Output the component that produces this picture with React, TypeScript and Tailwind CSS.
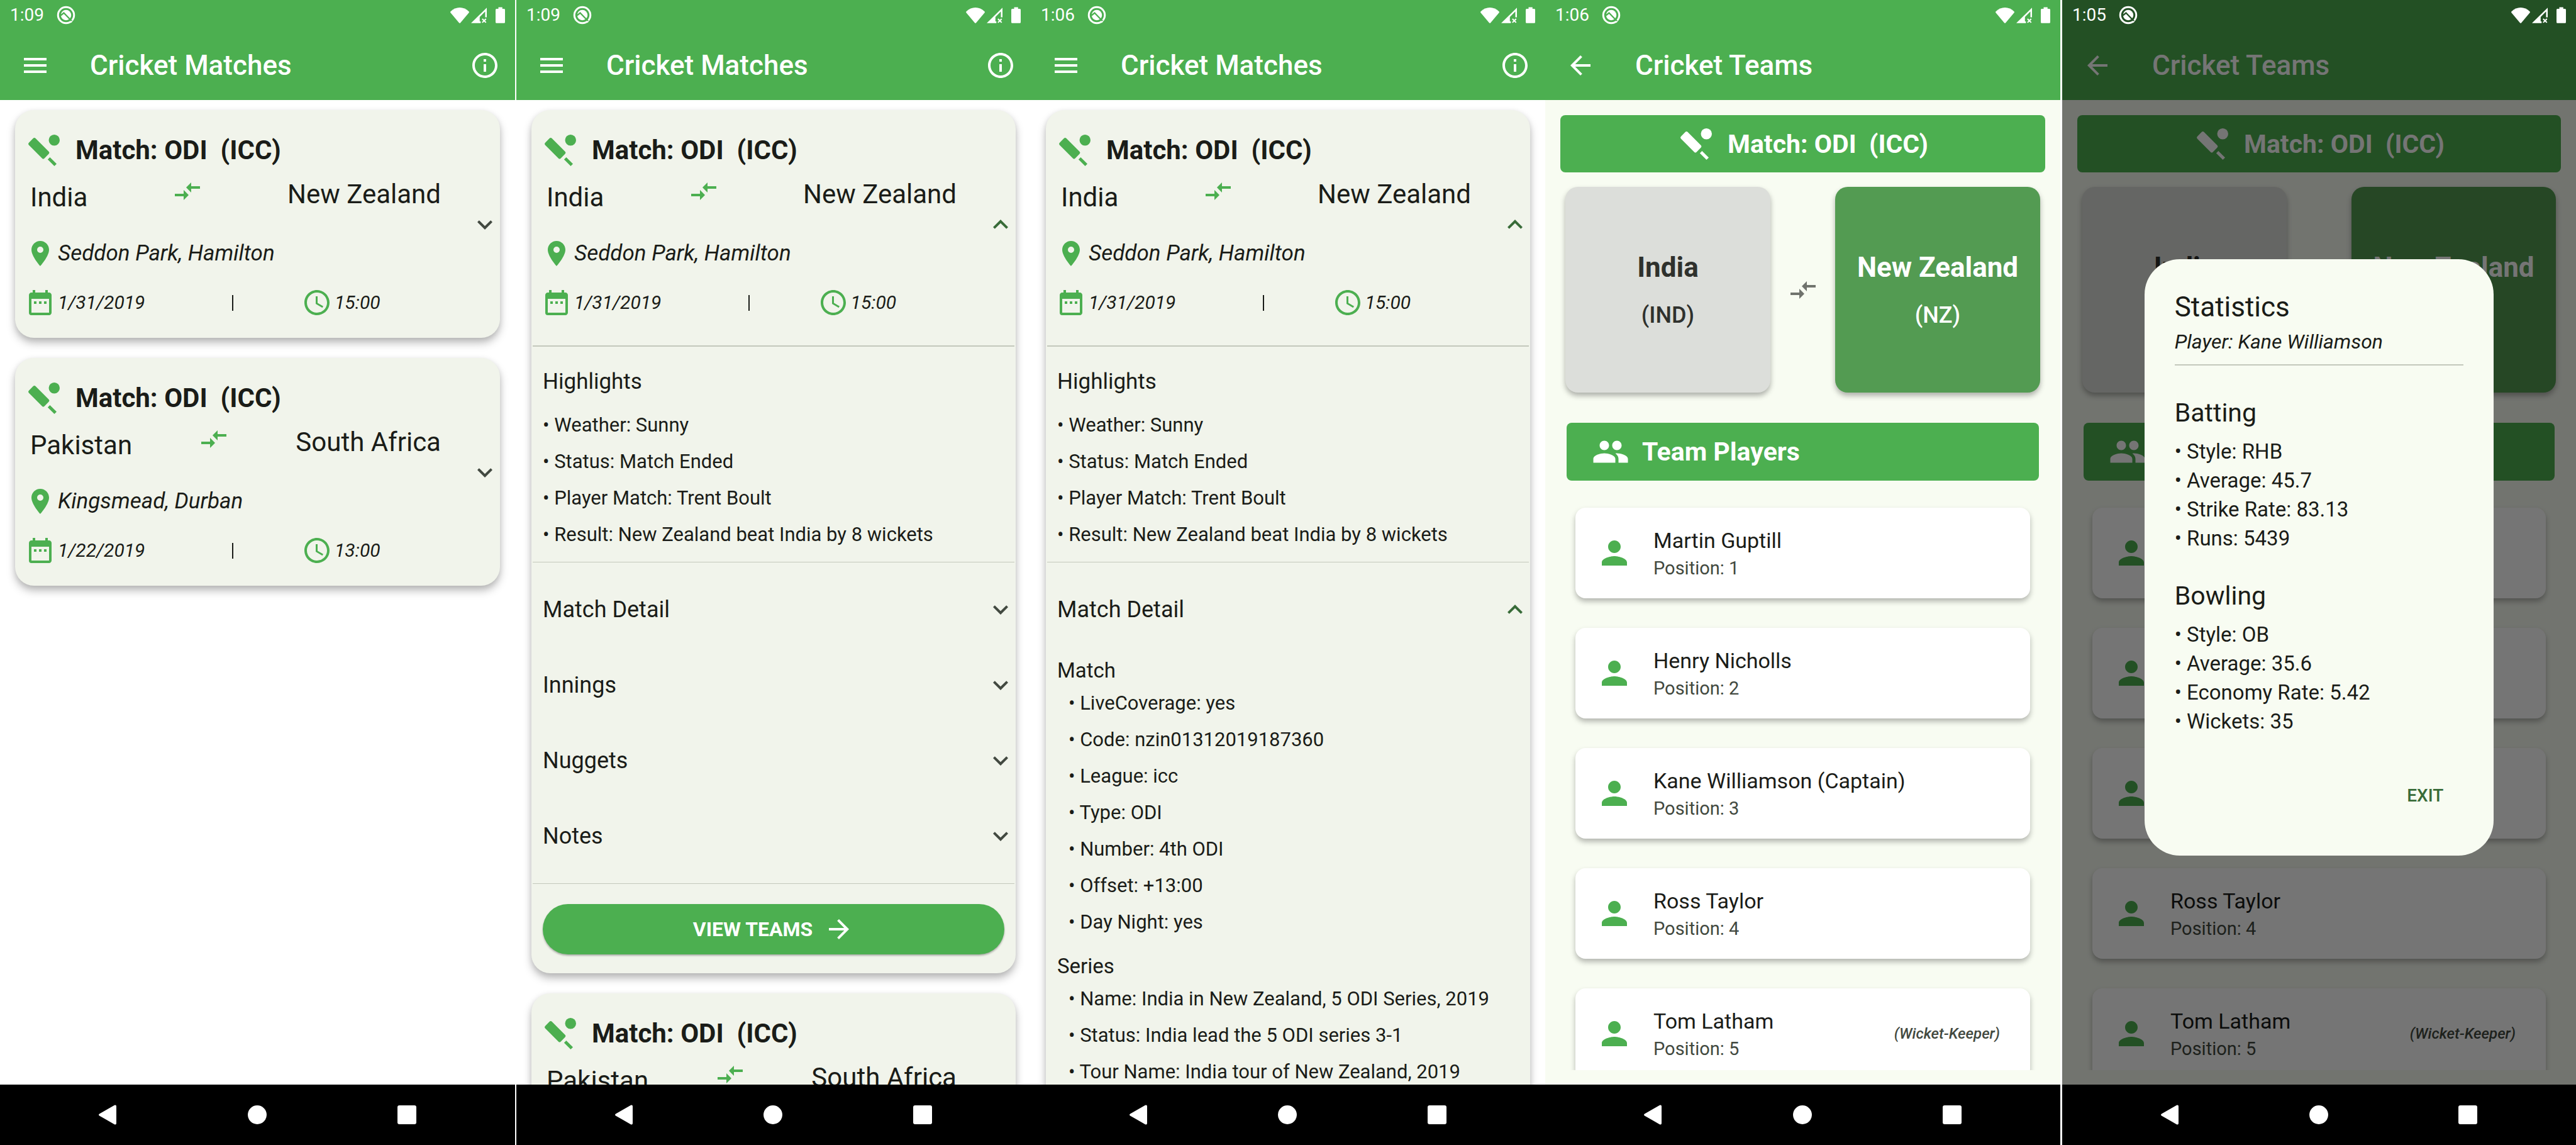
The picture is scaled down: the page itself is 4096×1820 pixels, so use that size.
import type { ReactNode } from "react";
import {
  MdArrowBack,
  MdArrowForward,
  MdCompareArrows,
  MdDateRange,
  MdExpandLess,
  MdExpandMore,
  MdGroup,
  MdInfoOutline,
  MdLocationOn,
  MdMenu,
  MdPerson,
} from "react-icons/md";

type Match = { home: string; away: string; venue: string; date: string; time: string };

const matches: Match[] = [
  { home: "India", away: "New Zealand", venue: "Seddon Park, Hamilton", date: "1/31/2019", time: "15:00" },
  { home: "Pakistan", away: "South Africa", venue: "Kingsmead, Durban", date: "1/22/2019", time: "13:00" },
];

const highlights = [
  "Weather: Sunny",
  "Status: Match Ended",
  "Player Match: Trent Boult",
  "Result: New Zealand beat India by 8 wickets",
];

const sections = ["Match Detail", "Innings", "Nuggets", "Notes"];

const details = [
  {
    title: "Match",
    items: [
      "LiveCoverage: yes",
      "Code: nzin01312019187360",
      "League: icc",
      "Type: ODI",
      "Number: 4th ODI",
      "Offset: +13:00",
      "Day Night: yes",
    ],
  },
  {
    title: "Series",
    items: [
      "Name: India in New Zealand, 5 ODI Series, 2019",
      "Status: India lead the 5 ODI series 3-1",
      "Tour Name: India tour of New Zealand, 2019",
    ],
  },
];

const players = [
  { name: "Martin Guptill", role: "" },
  { name: "Henry Nicholls", role: "" },
  { name: "Kane Williamson (Captain)", role: "" },
  { name: "Ross Taylor", role: "" },
  { name: "Tom Latham", role: "(Wicket-Keeper)" },
];

const statistics = [
  { title: "Batting", items: ["Style: RHB", "Average: 45.7", "Strike Rate: 83.13", "Runs: 5439"] },
  { title: "Bowling", items: ["Style: OB", "Average: 35.6", "Economy Rate: 5.42", "Wickets: 35"] },
];

function CricketIcon({ className }: { className: string }) {
  return (
    <svg viewBox="0 0 24 24" fill="currentColor" aria-hidden="true" className={className}>
      <path d="M15.05 12.81 6.56 4.32a1 1 0 0 0-1.41 0L2.32 7.15a1 1 0 0 0 0 1.41l8.49 8.49a1 1 0 0 0 1.41 0l2.83-2.83a1 1 0 0 0 0-1.41z" />
      <path d="m14.34 17.76 1.41-1.41L20 20.6 18.58 22z" />
      <circle cx="18.5" cy="5.5" r="3.5" />
    </svg>
  );
}

function ClockIcon({ className }: { className: string }) {
  return (
    <svg viewBox="0 0 24 24" fill="currentColor" aria-hidden="true" className={className}>
      <path d="M11.99 2C6.47 2 2 6.48 2 12s4.47 10 9.99 10C17.52 22 22 17.52 22 12S17.52 2 11.99 2zM12 20c-4.42 0-8-3.58-8-8s3.58-8 8-8 8 3.58 8 8-3.58 8-8 8z" />
      <path d="M12.5 7H11v6l5.25 3.15.75-1.23-4.5-2.67z" />
    </svg>
  );
}

function StatusBar({ time, cutout }: { time: string; cutout: string }) {
  return (
    <div className="flex h-12 shrink-0 items-center px-4 text-white">
      <span className="text-[28px] leading-8">{time}</span>
      <svg viewBox="0 0 120 120" aria-hidden="true" className="ml-5 size-[30px]">
        <circle cx="60" cy="60" r="51" fill="none" stroke="currentColor" strokeWidth="12" />
        <circle cx="60" cy="60" r="33" fill="currentColor" />
        <path d="M26 62 46 46 97 99" fill="none" strokeWidth="9" className={cutout} />
        <path d="m88 107 10-8" fill="none" stroke="currentColor" strokeWidth="8" />
      </svg>
      <svg viewBox="0 0 117 97" fill="currentColor" aria-hidden="true" className="ml-auto h-[25px] w-[30px]">
        <path d="M2 24C34-8 83-8 115 24q3 3 1 7L62 95q-3 3-7 0L1 31q-2-4 1-7z" />
      </svg>
      <svg viewBox="0 0 98 97" fill="currentColor" aria-hidden="true" className="ml-[3px] size-[25px]">
        <path d="M98 0v60H88V24L54 58v28h6v11H0z" />
        <path d="m70 70 23 23m0-23L70 93" stroke="currentColor" strokeWidth="8" />
      </svg>
      <svg viewBox="0 0 60 101" fill="currentColor" aria-hidden="true" className="ml-[14px] h-[26px] w-[15px]">
        <path d="M18 0h25v10h11q6 0 6 6v79q0 6-6 6H6q-6 0-6-6V16q0-6 6-6h12z" />
      </svg>
    </div>
  );
}

function AppBar({ title, leading, trailing }: { title: string; leading: ReactNode; trailing?: ReactNode }) {
  return (
    <div className="flex h-[111px] shrink-0 items-center px-6">
      <button className="ml-2" aria-label="Navigate">
        {leading}
      </button>
      <h1 className="ml-[63px] flex-1 text-[44px] leading-[56px] font-medium">{title}</h1>
      {trailing}
    </div>
  );
}

function NavBar() {
  return (
    <nav aria-label="System" className="flex h-24 shrink-0 items-center justify-between bg-black px-[157px] text-white">
      <button aria-label="Back">
        <svg viewBox="0 0 28 32" fill="currentColor" className="h-8 w-7">
          <path d="M1 14.6 25 .8Q28-.4 28 2.8v26.4q0 3.200-3 2L1 17.400q-2-1.400 0-2.800z" />
        </svg>
      </button>
      <button aria-label="Home" className="size-[30px] rounded-full bg-white" />
      <button aria-label="Recent apps" className="size-[30px] rounded-[3px] bg-white" />
    </nav>
  );
}

function MatchesHeader({ time }: { time: string }) {
  return (
    <header className="shrink-0 bg-[#4caf50] text-white">
      <StatusBar time={time} cutout="stroke-[#4caf50]" />
      <AppBar
        title="Cricket Matches"
        leading={<MdMenu className="size-12" />}
        trailing={
          <button aria-label="About">
            <MdInfoOutline className="size-12" />
          </button>
        }
      />
    </header>
  );
}

function MatchSummary({ match, open = false }: { match: Match; open?: boolean }) {
  return (
    <button aria-expanded={open} className="flex w-full items-center pt-[34px] pb-8 pl-4 text-left">
      <div className="min-w-0 flex-1">
        <div className="flex items-center gap-5">
          <CricketIcon className="size-[60px] text-[#4caf50]" />
          <h2 className="text-[42px] leading-[60px] font-bold whitespace-pre">Match: ODI  (ICC)</h2>
        </div>
        <div className="mt-[11px] mr-[46px] ml-2 flex h-[58px] justify-between text-[42px] leading-[48px]">
          <span className="self-end">{match.home}</span>
          <MdCompareArrows className="size-12 self-start text-[#4caf50]" />
          <span className="self-center">{match.away}</span>
        </div>
        <div className="mt-[41px] flex items-center gap-1">
          <MdLocationOn className="size-12 text-[#4caf50]" />
          <span className="text-[35px] leading-[48px] italic">{match.venue}</span>
        </div>
        <div className="mt-[30px] grid grid-cols-[329fr_2px_376fr] items-center text-[30px] leading-[48px]">
          <div className="flex items-center gap-1">
            <MdDateRange className="size-12 text-[#4caf50]" />
            <span className="italic">{match.date}</span>
          </div>
          <div className="h-[25px] bg-[#1a1c18]" />
          <div className="flex items-center gap-1 pl-[109px]">
            <ClockIcon className="size-12 text-[#4caf50]" />
            <span className="italic">{match.time}</span>
          </div>
        </div>
      </div>
      {open ? (
        <MdExpandLess className="size-12 text-[#386b38]" />
      ) : (
        <MdExpandMore className="size-12 text-[#424940]" />
      )}
    </button>
  );
}

function Card({ children }: { children: ReactNode }) {
  return (
    <article className="shrink-0 rounded-[30px] bg-[#f1f4eb] text-[#1a1c18] shadow-[0_8px_14px_rgba(0,0,0,0.26),0_2px_8px_rgba(0,0,0,0.08)]">
      {children}
    </article>
  );
}

function CardList({ children }: { children: ReactNode }) {
  return <main className="flex min-h-0 flex-1 flex-col gap-8 overflow-hidden px-6 py-4">{children}</main>;
}

function Highlights() {
  return (
    <section className="mx-[2px] mt-3 border-y border-t-2 border-[#c3c8bc] px-4 pt-9 pb-[14px]">
      <h3 className="text-[35px] leading-10">Highlights</h3>
      <ul className="mt-5 text-[31px] leading-[58px]">
        {highlights.map((item) => (
          <li key={item}>• {item}</li>
        ))}
      </ul>
    </section>
  );
}

function SectionTile({ title, open = false }: { title: string; open?: boolean }) {
  return (
    <button
      aria-expanded={open}
      className="flex h-[120px] w-full items-center justify-between pl-[18px] text-left text-[36px]"
    >
      <span>{title}</span>
      {open ? (
        <MdExpandLess className="size-12 text-[#386b38]" />
      ) : (
        <MdExpandMore className="size-12 text-[#424940]" />
      )}
    </button>
  );
}

function MatchBanner() {
  return (
    <div className="flex h-[91px] shrink-0 items-center justify-center gap-5 rounded-lg bg-[#4caf50] text-white">
      <CricketIcon className="size-[60px]" />
      <h2 className="text-[41px] leading-[60px] font-bold whitespace-pre">Match: ODI  (ICC)</h2>
    </div>
  );
}

function TeamCard({ name, code, selected = false }: { name: string; code: string; selected?: boolean }) {
  return (
    <button
      aria-pressed={selected}
      className={
        selected
          ? "flex h-[327px] flex-col items-center justify-center gap-5 rounded-[20px] bg-[#539b52] pt-1 text-white shadow-[0_5px_9px_rgba(0,0,0,0.3)]"
          : "flex h-[327px] flex-col items-center justify-center gap-5 rounded-[20px] bg-[#dcdeda] pt-1 text-[#2f312d] shadow-[0_5px_9px_rgba(0,0,0,0.3)]"
      }
    >
      <span className="text-[44px] leading-[56px] font-bold">{name}</span>
      <span className="text-[36px] leading-[56px] font-medium">({code})</span>
    </button>
  );
}

function TeamsScreen({ time, dialog }: { time: string; dialog?: ReactNode }) {
  return (
    <>
      <div className="relative flex min-h-0 flex-1 flex-col bg-[#f8fcf2]">
        <header className="shrink-0 bg-[#4caf50] text-white">
          {dialog ? <div className="h-12" /> : <StatusBar time={time} cutout="stroke-[#4caf50]" />}
          <AppBar title="Cricket Teams" leading={<MdArrowBack className="size-12" />} />
        </header>
        <main className="flex min-h-0 flex-1 flex-col px-6 pt-6 pb-[23px] text-[#1a1c18]">
          <MatchBanner />
          <div className="mx-2 mt-[23px] grid grid-cols-[1fr_103px_1fr] items-center">
            <TeamCard name="India" code="IND" />
            <MdCompareArrows className="size-12 justify-self-center text-[#70736d]" />
            <TeamCard name="New Zealand" code="NZ" selected />
          </div>
          <div className="mx-[10px] mt-12 flex h-[92px] shrink-0 items-center gap-5 rounded-lg bg-[#4caf50] px-10 text-white">
            <MdGroup className="size-[60px]" />
            <h2 className="text-[41px] leading-[60px] font-bold">Team Players</h2>
          </div>
          <ul className="flex min-h-0 flex-1 flex-col gap-[47px] overflow-hidden px-6 pt-[43px]">
            {players.map((player, index) => (
              <li key={player.name} className="shrink-0">
                <button className="flex h-36 w-full items-center rounded-2xl bg-white pr-12 pl-8 text-left shadow-[0_5px_9px_rgba(0,0,0,0.28)]">
                  <MdPerson className="size-[60px] text-[#4caf50]" />
                  <span className="ml-8 flex flex-1 flex-col">
                    <span className="text-[34px] leading-[48px]">{player.name}</span>
                    <span className="text-[29px] leading-10 text-[#424940]">Position: {index + 1}</span>
                  </span>
                  <span className="text-[24px] font-medium text-[#424940] italic">{player.role}</span>
                </button>
              </li>
            ))}
          </ul>
        </main>
        {dialog}
      </div>
      <NavBar />
    </>
  );
}

function StatisticsDialog({ time }: { time: string }) {
  return (
    <div className="absolute inset-0 flex flex-col bg-black/54">
      <StatusBar time={time} cutout="stroke-[#235025]" />
      <div className="grid flex-1 place-items-center">
        <section
          role="dialog"
          aria-labelledby="statistics-title"
          className="w-[68%] rounded-[56px] bg-[#f8fcf2] px-12 pt-12 pb-[55px] text-[#1a1c18]"
        >
          <h2 id="statistics-title" className="text-[44px] leading-[56px]">
            Statistics
          </h2>
          <p className="border-b-2 border-[#c3c8bc] pb-[9px] text-[32px] leading-[54px] italic">
            Player: Kane Williamson
          </p>
          <div className="mt-[47px] flex flex-col gap-10">
            {statistics.map((group) => (
              <div key={group.title}>
                <h3 className="text-[41px] leading-[56px]">{group.title}</h3>
                <ul className="mt-[11px] text-[33px] leading-[46px]">
                  {group.items.map((item) => (
                    <li key={item}>• {item}</li>
                  ))}
                </ul>
              </div>
            ))}
          </div>
          <div className="mt-[55px] flex justify-end pr-2">
            <button className="h-20 px-6 text-[28px] font-medium text-[#386b38]">EXIT</button>
          </div>
        </section>
      </div>
    </div>
  );
}

export default function App() {
  return (
    <div className="grid h-screen grid-cols-[819fr_820fr_818fr_819fr_820fr] overflow-hidden bg-white font-['Roboto',sans-serif]">
      <div className="flex min-h-0 min-w-0 flex-col">
        <MatchesHeader time="1:09" />
        <CardList>
          {matches.map((match) => (
            <Card key={match.home}>
              <MatchSummary match={match} />
            </Card>
          ))}
        </CardList>
        <NavBar />
      </div>

      <div className="ml-[2px] flex min-h-0 min-w-0 flex-col">
        <MatchesHeader time="1:09" />
        <CardList>
          <Card>
            <MatchSummary match={matches[0]} open />
            <Highlights />
            <div className="py-[15px]">
              {sections.map((title) => (
                <SectionTile key={title} title={title} />
              ))}
            </div>
            <div className="mx-[2px] border-t border-[#c3c8bc] px-4 pt-8 pb-[30px]">
              <button className="flex h-20 w-full items-center justify-center gap-[18px] rounded-full bg-[#4caf50] text-[32px] font-bold text-white shadow-[0_2px_3px_rgba(0,0,0,0.3)]">
                VIEW TEAMS
                <MdArrowForward className="size-12" />
              </button>
            </div>
          </Card>
          <Card>
            <MatchSummary match={matches[1]} />
          </Card>
        </CardList>
        <NavBar />
      </div>

      <div className="flex min-h-0 min-w-0 flex-col">
        <MatchesHeader time="1:06" />
        <CardList>
          <Card>
            <MatchSummary match={matches[0]} open />
            <Highlights />
            <div className="pt-[15px] pb-16">
              <SectionTile title="Match Detail" open />
              <div className="flex flex-col gap-[21px] px-[18px] pt-[17px]">
                {details.map((group) => (
                  <div key={group.title}>
                    <h3 className="text-[33px] leading-10">{group.title}</h3>
                    <ul className="mt-[3px] pl-[18px] text-[31px] leading-[58px]">
                      {group.items.map((item) => (
                        <li key={item}>• {item}</li>
                      ))}
                    </ul>
                  </div>
                ))}
              </div>
            </div>
          </Card>
        </CardList>
        <NavBar />
      </div>

      <div className="flex min-h-0 min-w-0 flex-col">
        <TeamsScreen time="1:06" />
      </div>

      <div className="ml-[3px] flex min-h-0 min-w-0 flex-col">
        <TeamsScreen time="1:05" dialog={<StatisticsDialog time="1:05" />} />
      </div>
    </div>
  );
}
